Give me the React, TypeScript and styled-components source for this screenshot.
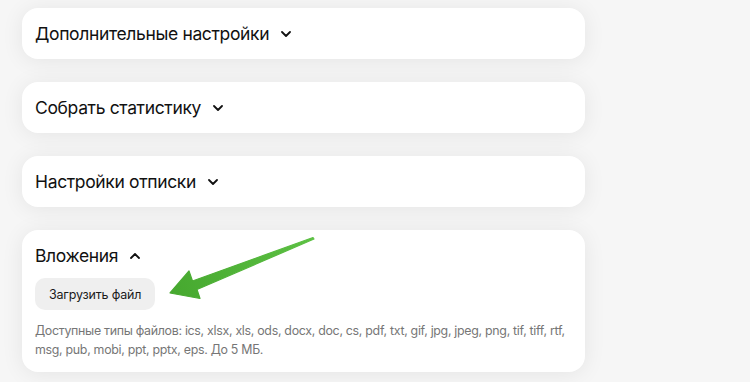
import React from "react";
import styled, { createGlobalStyle } from "styled-components";

const Global = createGlobalStyle`
  html, body { margin: 0; padding: 0; }
  body {
    background: #f6f6f6;
    font-family: Inter, "Noto Sans", "Liberation Sans", sans-serif;
    color: #111;
    -webkit-font-smoothing: antialiased;
  }
`;

const Page = styled.div`
  position: relative;
  width: 750px;
  height: 382px;
  overflow: hidden;
  box-sizing: border-box;
  padding: 8px 0 0 22px;
`;

const List = styled.div`
  width: 563px;
  display: flex;
  flex-direction: column;
  gap: 23px;
`;

const Card = styled.section<{ $open?: boolean }>`
  background: #fff;
  border-radius: 16px;
  box-shadow: 0 2px 22px rgba(0, 0, 0, 0.075);
  padding: ${(p) => (p.$open ? "14px 13px 13px" : "14px 13px")};
  box-sizing: border-box;
  min-height: 51px;
`;

const Header = styled.div`
  display: flex;
  align-items: center;
  gap: 12px;
  height: 23px;
`;

const Title = styled.span`
  font-size: 17.5px;
  letter-spacing: -0.35px;
  line-height: 23px;
  font-weight: 400;
  color: #111;
`;

const Chevron = styled.svg<{ $up?: boolean }>`
  width: 10px;
  height: 6px;
  transform: ${(p) => (p.$up ? "rotate(180deg)" : "none")};
`;

const UploadButton = styled.button`
  margin-top: 11px;
  height: 32px;
  padding: 0 14px;
  border: none;
  border-radius: 10px;
  background: #efefef;
  font-family: inherit;
  font-size: 12.5px;
  letter-spacing: -0.2px;
  color: #1a1a1a;
  cursor: pointer;
`;

const Hint = styled.p`
  margin: 11px 0 0;
  font-size: 12.4px;
  letter-spacing: -0.3px;
  line-height: 19px;
  color: #767676;
  width: 560px;
`;

const ArrowLayer = styled.svg`
  position: absolute;
  left: 0;
  top: 0;
  width: 750px;
  height: 382px;
  pointer-events: none;
`;

const ChevronIcon = ({ up }: { up?: boolean }) => (
  <Chevron $up={up} viewBox="0 0 10 6">
    <path d="M1 1 L5 5 L9 1" fill="none" stroke="#111" strokeWidth="1.8" strokeLinecap="round" strokeLinejoin="round" />
  </Chevron>
);

const sections = ["Дополнительные настройки", "Собрать статистику", "Настройки отписки"];

export default function App() {
  return (
    <>
      <Global />
      <Page>
        <List>
          {sections.map((s) => (
            <Card key={s}>
              <Header>
                <Title>{s}</Title>
                <ChevronIcon />
              </Header>
            </Card>
          ))}
          <Card $open>
            <Header>
              <Title>Вложения</Title>
              <ChevronIcon up />
            </Header>
            <UploadButton>Загрузить файл</UploadButton>
            <Hint>
              Доступные типы файлов: ics, xlsx, xls, ods, docx, doc, cs, pdf, txt, gif, jpg, jpeg, png, tif, tiff, rtf,
              msg, pub, mobi, ppt, pptx, eps. До 5 МБ.
            </Hint>
          </Card>
        </List>
        <ArrowLayer viewBox="0 0 750 382">
          <defs>
            <linearGradient id="ag" x1="313" y1="238" x2="170" y2="293" gradientUnits="userSpaceOnUse">
              <stop offset="0" stopColor="#5cc043" />
              <stop offset="1" stopColor="#46a82f" />
            </linearGradient>
          </defs>
          <path
            d="M170 293 L189 271 L192.5 281 L313 237.5 L314 239 L197 289.5 L200 298.5 Z"
            fill="url(#ag)"
            stroke="url(#ag)"
            strokeWidth="1.2"
            strokeLinejoin="round"
          />
        </ArrowLayer>
      </Page>
    </>
  );
}
